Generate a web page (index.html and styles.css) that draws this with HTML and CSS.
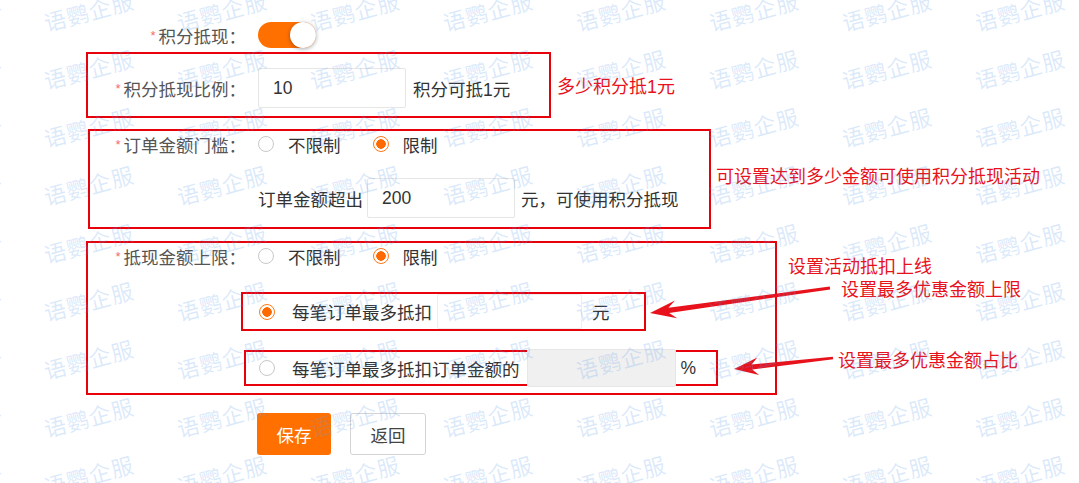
FILE: index.html
```html
<!DOCTYPE html>
<html lang="zh-CN">
<head>
    <meta charset="UTF-8">
    <meta name="viewport" content="width=device-width, initial-scale=1.0">
    <title>积分抵现设置</title>
    <link rel="stylesheet" href="styles.css">
</head>
<body>

<div class="page">

    <div class="row row-top">
        <span class="label label-wide"><i class="req">*</i>积分抵现：</span>
        <span class="switch on"><span class="knob"></span></span>
    </div>

    <div class="group group-ratio">
        <div class="box box-ratio">
            <div class="row">
                <span class="label"><i class="req">*</i>积分抵现比例：</span>
                <span class="input">10</span>
                <span class="after">积分可抵1元</span>
            </div>
        </div>
        <span class="note note-ratio">多少积分抵1元</span>
    </div>

    <div class="group group-limit">
        <div class="box box-limit">
            <div class="row">
                <span class="label label-168"><i class="req">*</i>订单金额门槛：</span>
                <span class="radio"></span><span class="radio-text">不限制</span>
                <span class="radio checked"></span><span class="radio-text">限制</span>
            </div>
            <div class="row row-amount">
                <span class="before">订单金额超出</span>
                <span class="input">200</span>
                <span class="after">元，可使用积分抵现</span>
            </div>
        </div>
        <span class="note note-limit">可设置达到多少金额可使用积分抵现活动</span>
    </div>

    <div class="group group-cap">
        <div class="box box-cap">
            <div class="row">
                <span class="label"><i class="req">*</i>抵现金额上限：</span>
                <span class="radio"></span><span class="radio-text">不限制</span>
                <span class="radio checked"></span><span class="radio-text">限制</span>
            </div>
            <div class="sub sub-money">
                <span class="radio checked"></span>
                <span class="sub-text">每笔订单最多抵扣</span>
                <span class="input input-plain"></span>
                <span class="unit">元</span>
            </div>
            <div class="sub sub-rate">
                <span class="radio"></span>
                <span class="sub-text">每笔订单最多抵扣订单金额的</span>
                <span class="input input-off"></span>
                <span class="unit">%</span>
            </div>
        </div>
        <span class="note note-cap">设置活动抵扣上线</span>
    </div>

    <div class="buttons">
        <button class="btn btn-save">保存</button>
        <button class="btn btn-back">返回</button>
    </div>

    <span class="note note-float note-money">设置最多优惠金额上限</span>
    <span class="note note-float note-rate">设置最多优惠金额占比</span>

    <svg class="arrows" width="1079" height="483" viewBox="0 0 1079 483">
        <polygon points="650,313 675,300.5 668.4,307.8 829.8,286.6 830.2,289.4 669.2,312.9 677.2,318.3" fill="#e8121c"/>
        <polygon points="734,369 757.3,357.6 751.6,364.5 832.8,356.7 833.2,359.3 752.2,369.5 759.1,375.1" fill="#e8121c"/>
    </svg>

    <div class="watermark">
        <span>语鹦企服</span><span>语鹦企服</span><span>语鹦企服</span><span>语鹦企服</span><span>语鹦企服</span><span>语鹦企服</span><span>语鹦企服</span><span>语鹦企服</span><span>语鹦企服</span>
        <span>语鹦企服</span><span>语鹦企服</span><span>语鹦企服</span><span>语鹦企服</span><span>语鹦企服</span><span>语鹦企服</span><span>语鹦企服</span><span>语鹦企服</span><span>语鹦企服</span>
        <span>语鹦企服</span><span>语鹦企服</span><span>语鹦企服</span><span>语鹦企服</span><span>语鹦企服</span><span>语鹦企服</span><span>语鹦企服</span><span>语鹦企服</span><span>语鹦企服</span>
        <span>语鹦企服</span><span>语鹦企服</span><span>语鹦企服</span><span>语鹦企服</span><span>语鹦企服</span><span>语鹦企服</span><span>语鹦企服</span><span>语鹦企服</span><span>语鹦企服</span>
        <span>语鹦企服</span><span>语鹦企服</span><span>语鹦企服</span><span>语鹦企服</span><span>语鹦企服</span><span>语鹦企服</span><span>语鹦企服</span><span>语鹦企服</span><span>语鹦企服</span>
        <span>语鹦企服</span><span>语鹦企服</span><span>语鹦企服</span><span>语鹦企服</span><span>语鹦企服</span><span>语鹦企服</span><span>语鹦企服</span><span>语鹦企服</span><span>语鹦企服</span>
        <span>语鹦企服</span><span>语鹦企服</span><span>语鹦企服</span><span>语鹦企服</span><span>语鹦企服</span><span>语鹦企服</span><span>语鹦企服</span><span>语鹦企服</span><span>语鹦企服</span>
        <span>语鹦企服</span><span>语鹦企服</span><span>语鹦企服</span><span>语鹦企服</span><span>语鹦企服</span><span>语鹦企服</span><span>语鹦企服</span><span>语鹦企服</span><span>语鹦企服</span>
        <span>语鹦企服</span><span>语鹦企服</span><span>语鹦企服</span><span>语鹦企服</span><span>语鹦企服</span><span>语鹦企服</span><span>语鹦企服</span><span>语鹦企服</span><span>语鹦企服</span>
    </div>

</div>

</body>
</html>
```

FILE: styles.css
```css
body {
    margin: 0;
    padding: 0;
    background: #fff;
    color: #333;
    font-family: "Liberation Sans", "Noto Sans CJK SC", sans-serif;
    font-size: 17.5px;
}
.page {
    position: relative;
    width: 1079px;
    height: 483px;
    overflow: hidden;
    padding-top: 20px;
    box-sizing: border-box;
}
.row {
    display: flex;
    align-items: center;
    height: 26px;
}
.row-top {
    height: 30px;
}
.label {
    width: 170px;
    padding-right: 12px;
    box-sizing: border-box;
    text-align: right;
    color: #555;
    white-space: nowrap;
}
.label-wide {
    width: 258px;
}
.label-168 {
    width: 168px;
}
.req {
    font-style: normal;
    color: #f56c6c;
    font-size: 13px;
    margin-right: 3px;
    vertical-align: 3px;
}
.switch {
    position: relative;
    width: 58px;
    height: 26px;
    border-radius: 13px;
    background: #ff7000;
}
.switch .knob {
    position: absolute;
    right: 0;
    top: 0;
    width: 26px;
    height: 26px;
    border-radius: 50%;
    background: #fff;
    box-shadow: 0 1px 4px rgba(0, 0, 0, 0.35);
}
.group {
    display: flex;
    align-items: center;
}
.box {
    border: 2px solid #e8000b;
    box-sizing: border-box;
}
.note {
    color: #e8121c;
    font-size: 18px;
    white-space: nowrap;
}
.group-ratio {
    margin-top: 2px;
}
.box-ratio {
    margin-left: 86px;
    width: 465px;
    padding: 14px 0 8px;
}
.box-ratio .row {
    height: 40px;
}
.note-ratio {
    margin-left: 6px;
}
.input {
    display: flex;
    align-items: center;
    width: 148px;
    height: 40px;
    padding-left: 14px;
    box-sizing: border-box;
    border: 1px solid #e6e6e6;
    border-radius: 2px;
    background: #fff;
    color: #333;
}
.after {
    margin-left: 7px;
}
.group-limit {
    margin-top: 11px;
}
.box-limit {
    margin-left: 88px;
    width: 623px;
    padding-bottom: 9px;
}
.note-limit {
    align-self: flex-start;
    margin: 33px 0 0 5px;
}
.radio {
    width: 16px;
    height: 16px;
    border: 1px solid #c8c8c8;
    border-radius: 50%;
    box-sizing: border-box;
    background: #fff;
    flex-shrink: 0;
}
.radio.checked {
    border-color: #ff7a1a;
    background: radial-gradient(circle, #ff6a00 0 4.5px, #fff 5px);
}
.radio-text {
    margin-left: 14px;
    margin-right: 32px;
}
.row-amount {
    margin-top: 21px;
    height: 40px;
    padding-left: 168px;
}
.row-amount .after {
    margin-left: 6px;
}
.before {
    margin-right: 4px;
}
.group-cap {
    margin-top: 12px;
}
.box-cap {
    margin-left: 86px;
    width: 691px;
    padding-bottom: 7px;
}
.note-cap {
    align-self: flex-start;
    margin: 11px 0 0 11px;
}
.sub {
    display: flex;
    align-items: center;
    border: 2px solid #e8000b;
    box-sizing: border-box;
}
.sub-money {
    margin: 23px 0 0 153px;
    width: 405px;
    height: 39px;
    padding-left: 16px;
}
.sub-rate {
    margin: 19px 0 0 156px;
    width: 474px;
    height: 36px;
    padding-left: 13px;
}
.sub-text {
    margin-left: 17px;
}
.input-plain {
    margin-left: 5px;
    width: 145px;
    height: 35px;
    border-color: #eee;
}
.input-off {
    margin-left: 7px;
    width: 149px;
    height: 38px;
    background: #f0f0f0;
    border-color: #e6e6e6;
}
.sub-money .unit {
    margin-left: 10px;
}
.sub-rate .unit {
    margin-left: 5px;
}
.buttons {
    display: flex;
    margin-top: 18px;
    padding-left: 257px;
}
.btn {
    height: 42px;
    border-radius: 3px;
    font-family: inherit;
    font-size: 17.5px;
    padding: 0;
    cursor: pointer;
}
.btn-save {
    width: 74px;
    border: none;
    background: #ff7000;
    color: #fff;
}
.btn-back {
    width: 76px;
    margin-left: 19px;
    border: 1px solid #d4d4d4;
    background: #fff;
    color: #444;
}
.note-float {
    position: absolute;
    line-height: 22px;
}
.note-money {
    left: 841px;
    top: 279px;
}
.note-rate {
    left: 838px;
    top: 350px;
}
.arrows {
    position: absolute;
    left: 0;
    top: 0;
}
.watermark {
    position: absolute;
    left: -91px;
    top: -24px;
    display: grid;
    grid-template-columns: repeat(9, 133px);
    grid-auto-rows: 58px;
    pointer-events: none;
}
.watermark span {
    display: flex;
    align-items: center;
    font-family: "Noto Sans CJK SC", sans-serif;
    font-size: 22px;
    letter-spacing: 1px;
    color: rgba(90, 155, 235, 0.22);
    transform: rotate(-15deg);
    white-space: nowrap;
}
```
